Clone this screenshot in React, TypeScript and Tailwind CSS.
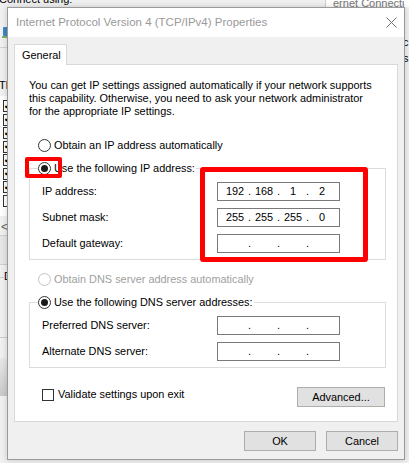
import React from 'react'

// Windows 10 style "Internet Protocol Version 4 (TCP/IPv4) Properties" dialog

const Radio = ({ checked = false, disabled = false }: { checked?: boolean; disabled?: boolean }) => (
    <span
        className={
            disabled
                ? 'flex h-[13px] w-[13px] shrink-0 items-center justify-center rounded-full border border-[#c4c4c4] bg-white'
                : 'flex h-[13px] w-[13px] shrink-0 items-center justify-center rounded-full border border-[#333333] bg-white'
        }
    >
        {checked && <span className="h-[7px] w-[7px] rounded-full bg-[#1a1a1a]" />}
    </span>
)

const IpField = ({ octets }: { octets?: string[] }) => {
    const parts = octets ?? ['', '', '', '']
    return (
        <div className="flex h-[19px] w-[123px] items-center border border-[#7a7a7a] bg-white pl-[6px] leading-[13px]">
            {parts.map((o, i) => (
                <div key={i} className="flex items-center">
                    <span className="w-[22px] text-center">{o}</span>
                    {i < 3 && <span className="w-[7px] text-center">.</span>}
                </div>
            ))}
        </div>
    )
}

const FieldRow = ({ label, octets }: { label: string; octets?: string[] }) => (
    <div className="flex items-center">
        <span className="w-[175px] leading-[13px]">{label}</span>
        <IpField octets={octets} />
    </div>
)

const Button = ({ children, width }: { children: React.ReactNode; width: string }) => (
    <div className={`flex h-[20px] items-center justify-center border border-[#adadad] bg-[#e1e1e1] leading-[13px] ${width}`}>
        {children}
    </div>
)

// scraps of the Ethernet properties window sitting behind the dialog
const BackWindow = () => (
    <>
        <div className="absolute left-[-1px] top-[-9px] text-[11px] text-black">Connect using:</div>
        <div className="absolute left-[325px] top-0 h-[7px] w-[84px] border-l border-[#cfcfcf] bg-white" />
        <div className="absolute left-[333px] top-[-5px] text-[11px] text-[#777]">ernet Connecti</div>
        <div className="absolute left-[3px] top-[27px] h-[9px] w-[7px] rounded-[1px] bg-[#3d86c6]" />
        <div className="absolute left-[2px] top-[36px] h-[2px] w-[8px] bg-[#7fb069]" />
        <div className="absolute left-0 top-[47px] h-px w-[8px] bg-[#d2d2d2]" />
        <div className="absolute left-[-1px] top-[77px] text-[11px] text-black">This</div>
        <div className="absolute left-0 top-[96px] flex h-[120px] w-[8px] flex-col gap-[1.5px] bg-white pt-[4px]">
            {[0, 1, 2, 3, 4, 5, 6].map((i) => (
                <span key={i} className="ml-[3px] flex h-[12px] w-[12px] items-center border border-[#333] text-[9px] leading-none">
                    ✔
                </span>
            ))}
            <span className="ml-[3px] h-[12px] w-[12px] border border-[#333]" />
        </div>
        <div className="absolute left-[1px] top-[220px] text-[12px] leading-[14px] text-[#606060]">&lt;</div>
        <div className="absolute left-0 top-[235px] h-[30px] w-[8px] border-y border-[#cfcfcf] bg-[#e6e6e6]" />
        <div className="absolute left-0 top-[277px] h-px w-[4px] bg-[#cfcfcf]" />
        <div className="absolute left-[4px] top-[270px] text-[11px] leading-[13px]">D</div>
        <div className="absolute left-0 top-[337px] h-px w-[8px] bg-[#cfcfcf]" />
        <div className="absolute left-0 top-[358px] h-[38px] w-[8px] bg-gradient-to-b from-[#e8e8e8] to-[#c8c8c8]" />
        <div className="absolute left-[403px] top-[34px] text-[11px] leading-[16px] text-black">
            c<br />s
        </div>
    </>
)

export default function App() {
    return (
        <div className="relative h-[463px] w-[409px] overflow-hidden bg-[#f0f0f0] font-['Liberation_Sans',Arial,sans-serif] text-[10.9px] text-black">
            <BackWindow />

            <div className="absolute left-[7px] top-[7px] flex h-[453px] w-[398px] flex-col border border-[#9a9a9a] shadow-[0_0_6px_rgba(0,0,0,0.18)]">
                {/* title bar */}
                <div className="flex h-[29px] items-center justify-between bg-white pl-[8px] pr-[7px]">
                    <span className="text-[11.5px] text-[#999999]">Internet Protocol Version 4 (TCP/IPv4) Properties</span>
                    <svg width="11" height="11" viewBox="0 0 11 11" className="mb-[1px]">
                        <path d="M0.5 0.5 L10.5 10.5 M10.5 0.5 L0.5 10.5" stroke="#6f6f6f" strokeWidth="1" fill="none" />
                    </svg>
                </div>

                <div className="flex flex-1 flex-col bg-[#f0f0f0] px-[6px] pt-[7px]">
                    {/* tab strip */}
                    <div className="relative z-10 -mb-px flex h-[21px] w-[53px] items-center border border-b-0 border-[#d9d9d9] bg-white pl-[7px]">
                        General
                    </div>

                    {/* tab page */}
                    <div className="flex h-[358px] flex-col border border-[#d9d9d9] bg-white pl-[14px] pr-[11px] pt-[14px]">
                        <p className="leading-[13px]">
                            You can get IP settings assigned automatically if your network supports
                            <br />
                            this capability. Otherwise, you need to ask your network administrator
                            <br />
                            for the appropriate IP settings.
                        </p>

                        <div className="ml-[9px] mt-[21px] flex h-[13px] items-center gap-[3px] leading-[13px]">
                            <Radio />
                            <span>Obtain an IP address automatically</span>
                        </div>

                        <div className="mt-[16px] border border-[#dcdcdc] pb-[6px] pl-[12px]">
                            <div className="-mt-[7px] ml-[-4px] flex h-[13px] w-fit items-center gap-[3px] bg-white pr-[1px] leading-[13px]">
                                <Radio checked />
                                <span>Use the following IP address:</span>
                            </div>
                            <div className="mt-[7px] flex flex-col gap-[7px]">
                                <FieldRow label="IP address:" octets={['192', '168', '1', '2']} />
                                <FieldRow label="Subnet mask:" octets={['255', '255', '255', '0']} />
                                <FieldRow label="Default gateway:" />
                            </div>
                        </div>

                        <div className="ml-[9px] mt-[13px] flex h-[13px] items-center gap-[3px] leading-[13px] text-[#a0a0a0]">
                            <Radio disabled />
                            <span>Obtain DNS server address automatically</span>
                        </div>

                        <div className="mt-[16px] border border-[#dcdcdc] pb-[6px] pl-[12px]">
                            <div className="-mt-[7px] ml-[-4px] flex h-[13px] w-fit items-center gap-[3px] bg-white pr-[1px] leading-[13px]">
                                <Radio checked />
                                <span>Use the following DNS server addresses:</span>
                            </div>
                            <div className="mt-[7px] flex flex-col gap-[7px]">
                                <FieldRow label="Preferred DNS server:" />
                                <FieldRow label="Alternate DNS server:" />
                            </div>
                        </div>

                        <div className="mt-[19px] flex items-start justify-between pl-[13px] pr-px">
                            <div className="mt-[1px] flex h-[13px] items-center gap-[4px] leading-[13px]">
                                <span className="h-[12px] w-[12px] border border-[#333333] bg-white" />
                                <span>Validate settings upon exit</span>
                            </div>
                            <Button width="w-[88px]">Advanced...</Button>
                        </div>
                    </div>

                    {/* dialog buttons */}
                    <div className="mt-[9px] flex justify-end gap-[10px]">
                        <Button width="w-[72px]">OK</Button>
                        <Button width="w-[72px]">Cancel</Button>
                    </div>
                </div>
            </div>

            {/* red highlight marks */}
            <div className="pointer-events-none absolute left-[25px] top-[157px] h-[21px] w-[37px] rounded-[2px] border-[4px] border-[#ff0000]" />
            <div className="pointer-events-none absolute left-[200px] top-[167px] h-[95px] w-[168px] rounded-[3px] border-[5px] border-[#ff0000]" />
        </div>
    )
}
